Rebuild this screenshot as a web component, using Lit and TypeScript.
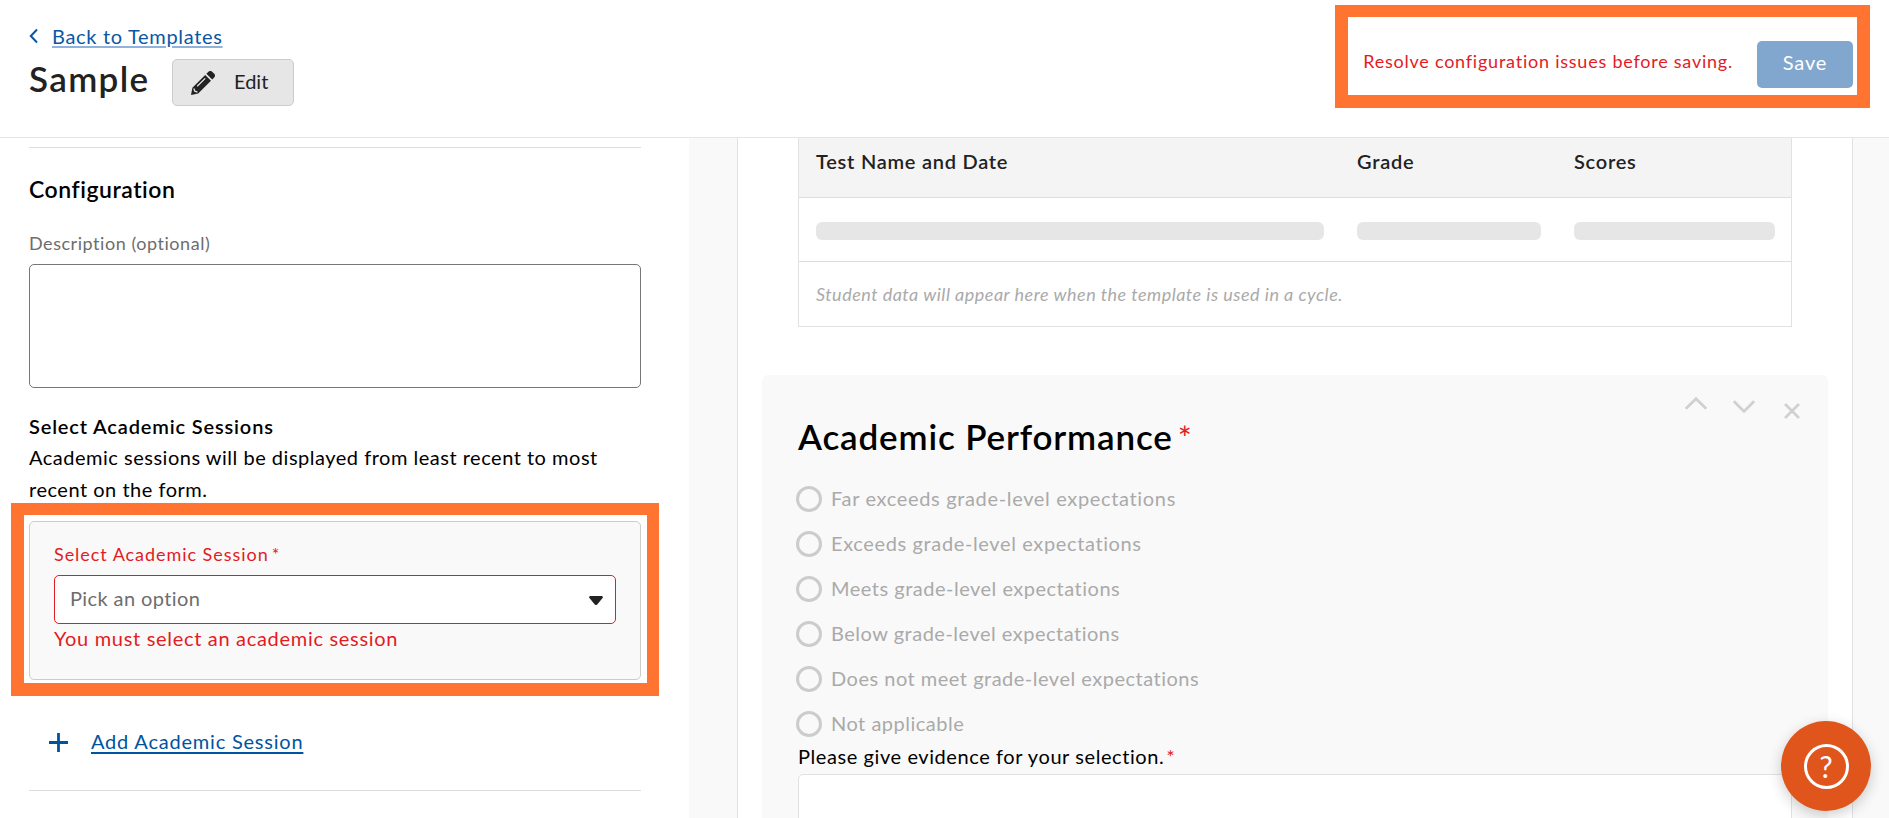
import {LitElement, html, css} from 'lit';
import {customElement, property} from 'lit/decorators.js';

@customElement('page-header')
class PageHeader extends LitElement {
  static override styles = css`
    :host {
      display: flex;
      justify-content: space-between;
      align-items: flex-start;
      box-sizing: border-box;
      height: 138px;
      padding: 24px 36px 0 29px;
      border-bottom: 1px solid #e5e5e5;
      background: white;
    }

    .back {
      display: flex;
      align-items: center;
      height: 24px;
      gap: 14px;
      color: #0a57a4;
      line-height: 24px;
      letter-spacing: 0.68px;
    }

    .back svg {
      width: 9px;
      height: 16px;
    }

    .back span {
      text-decoration: underline 2px #8fb3da;
      text-underline-offset: 2px;
    }

    .title {
      display: flex;
      align-items: flex-start;
      gap: 23px;
      margin-top: 11px;
    }

    h1 {
      width: 120px;
      margin: 0;
      color: #222;
      font-size: 35px;
      font-weight: 600;
      line-height: 39px;
      letter-spacing: 1.35px;
    }

    button {
      display: flex;
      align-items: center;
      box-sizing: border-box;
      height: 47px;
      border-radius: 5px;
      font: inherit;
    }

    .edit {
      width: 122px;
      gap: 19px;
      padding: 0 0 3px 18px;
      border: 1px solid #ccc;
      background: #e6e6e6;
      color: #222;
    }

    .edit svg {
      width: 24px;
      height: 24px;
      margin-top: 4px;
    }

    .actions {
      display: flex;
      align-items: center;
      gap: 24px;
      margin-top: 17px;
    }

    .error {
      padding-bottom: 8px;
      color: #e31b23;
      font-size: 18px;
      letter-spacing: 0.77px;
    }

    .save {
      justify-content: center;
      width: 96px;
      padding: 0 0 5px;
      border: none;
      background: #82a7ce;
      color: white;
      letter-spacing: 0.9px;
    }
  `;

  override render() {
    return html`
      <div>
        <div class="back">
          <svg viewBox="0 0 9 16" fill="none" stroke="currentColor" stroke-width="2">
            <path d="M8 1.5 1.8 8 8 14.5" />
          </svg>
          <span>Back to Templates</span>
        </div>
        <div class="title">
          <h1>Sample</h1>
          <button class="edit">
            <svg viewBox="0 0 24 24">
              <path
                fill="#222"
                d="M0 24 1.4 16.8 14.2 4 20 9.8 7.2 22.6zM15.4 2.8 17.2 1a3 3 0 0 1 4.2 0L23 2.6a3 3 0 0 1 0 4.2L21.2 8.6z"
              />
              <path
                fill="none"
                stroke="#e6e6e6"
                stroke-width="1.3"
                d="M6.2 15.2 14.2 7.4M2.8 17.6l1 2.6 2.6 1"
              />
            </svg>
            Edit
          </button>
        </div>
      </div>
      <div class="actions">
        <span class="error">Resolve configuration issues before saving.</span>
        <button class="save">Save</button>
      </div>
    `;
  }
}

@customElement('config-panel')
class ConfigPanel extends LitElement {
  static override styles = css`
    :host {
      display: block;
      box-sizing: border-box;
      width: 689px;
      padding: 9px 48px 0 29px;
      background: white;
    }

    hr {
      height: 1px;
      margin: 0;
      border: none;
      background: #ddd;
    }

    h2 {
      margin: 27px 0 0;
      font-size: 23px;
      font-weight: 600;
      line-height: 28px;
      letter-spacing: 0.53px;
    }

    .label {
      font-size: 18px;
      line-height: 22px;
    }

    .label--muted {
      margin-top: 29px;
      color: #6d6d6d;
      letter-spacing: 0.54px;
    }

    .label--error {
      color: #e31b23;
      letter-spacing: 0.95px;
    }

    .label--error span {
      margin-left: 3px;
    }

    .textarea {
      box-sizing: border-box;
      height: 124px;
      margin-top: 10px;
      border: 1px solid #777;
      border-radius: 5px;
    }

    h3 {
      margin: 26px 0 3px;
      font-size: 20px;
      font-weight: 600;
      line-height: 24px;
      letter-spacing: 0.84px;
    }

    p {
      margin: 0;
      line-height: 32px;
      letter-spacing: 0.51px;
    }

    .session {
      box-sizing: border-box;
      height: 159px;
      margin-top: 16px;
      padding: 21px 24px 0;
      border: 1px solid #ccc;
      border-radius: 5px;
      background: #f9f9f9;
    }

    .select {
      display: flex;
      align-items: center;
      justify-content: space-between;
      box-sizing: border-box;
      height: 49px;
      margin: 10px 0 2px;
      padding: 0 12px 3px 15px;
      border: 1px solid #e31b23;
      border-radius: 5px;
      background: white;
      color: #6d6d6d;
      letter-spacing: 0.4px;
    }

    .select svg {
      width: 14px;
      height: 9px;
      margin-top: 4px;
    }

    .message {
      color: #e31b23;
      line-height: 24px;
      letter-spacing: 0.69px;
    }

    .add {
      display: flex;
      align-items: center;
      gap: 23px;
      margin: 49px 0 37px;
      padding-left: 20px;
      color: #00539f;
      line-height: 24px;
      letter-spacing: 0.79px;
    }

    .add svg {
      width: 19px;
      height: 19px;
      margin-top: 3px;
    }

    .add span {
      text-decoration: underline 2px;
      text-underline-offset: 3px;
    }
  `;

  override render() {
    return html`
      <hr />
      <h2>Configuration</h2>
      <div class="label label--muted">Description (optional)</div>
      <div class="textarea"></div>
      <h3>Select Academic Sessions</h3>
      <p>
        Academic sessions will be displayed from least recent to most<br />recent on the form.
      </p>
      <div class="session">
        <div class="label label--error">Select Academic Session<span>*</span></div>
        <div class="select">
          Pick an option
          <svg viewBox="0 0 14 9">
            <path
              d="M1.4 0h11.2a1.3 1.3 0 0 1 1 2.1L8.2 8.4a1.6 1.6 0 0 1-2.4 0L.4 2.1A1.3 1.3 0 0 1 1.4 0z"
              fill="#222"
            />
          </svg>
        </div>
        <div class="message">You must select an academic session</div>
      </div>
      <div class="add">
        <svg viewBox="0 0 19 19" stroke="currentColor" stroke-width="2.8">
          <path d="M9.5 0v19M0 9.5h19" />
        </svg>
        <span>Add Academic Session</span>
      </div>
      <hr />
    `;
  }
}

@customElement('score-table')
class ScoreTable extends LitElement {
  static override styles = css`
    :host {
      display: block;
      margin: 0 60px;
      border: 1px solid #e2e2e2;
      border-top: none;
    }

    .row {
      display: grid;
      grid-template-columns: 508px 184px 201px;
      column-gap: 33px;
      box-sizing: border-box;
      height: 64px;
      padding: 2px 0 0 17px;
      align-items: center;
      border-bottom: 1px solid #ddd;
    }

    .row--head {
      height: 60px;
      padding-top: 11px;
      align-items: start;
      background: #f4f4f4;
      color: #222;
      font-weight: 600;
      line-height: 24px;
      letter-spacing: 0.75px;
    }

    .bone {
      height: 18px;
      border-radius: 6px;
      background: #e6e6e6;
    }

    .note {
      height: 64px;
      padding-left: 17px;
      color: #aaa;
      font-size: 18px;
      font-style: italic;
      line-height: 64px;
      letter-spacing: 0.48px;
    }
  `;

  @property({type: Array})
  columns: string[] = [];

  override render() {
    return html`
      <div class="row row--head">${this.columns.map((c) => html`<span>${c}</span>`)}</div>
      <div class="row">${this.columns.map(() => html`<div class="bone"></div>`)}</div>
      <div class="note">Student data will appear here when the template is used in a cycle.</div>
    `;
  }
}

@customElement('question-card')
class QuestionCard extends LitElement {
  static override styles = css`
    :host {
      display: block;
      height: 520px;
      margin: 48px 24px 0;
      padding: 0 36px;
      border-radius: 6px;
      background: #f9f9f9;
    }

    .head {
      display: flex;
      justify-content: space-between;
      align-items: flex-start;
      height: 81px;
    }

    h2 {
      margin: 41px 0 0;
      font-size: 35px;
      font-weight: 600;
      line-height: 40px;
      letter-spacing: 0.85px;
    }

    .required {
      color: #e31b23;
      font-weight: 400;
    }

    h2 .required {
      margin-left: 5px;
      font-size: 33px;
      line-height: 30px;
    }

    .controls {
      display: flex;
      gap: 24px;
      margin: 17px -12px 0 0;
    }

    .controls svg {
      width: 24px;
      height: 24px;
      overflow: visible;
      fill: none;
      stroke: #d0d0d0;
      stroke-width: 2.8;
    }

    .options {
      display: grid;
      gap: 20px;
      margin: 30px 0 8px -2px;
      color: #aaa;
      line-height: 25px;
      letter-spacing: 0.5px;
    }

    .option {
      display: flex;
      gap: 9px;
    }

    .option:first-child {
      letter-spacing: 0.66px;
    }

    .option:nth-child(2) {
      letter-spacing: 0.63px;
    }

    .radio {
      box-sizing: border-box;
      width: 26px;
      height: 26px;
      margin-bottom: -1px;
      border: 3px solid #ccc;
      border-radius: 50%;
    }

    .prompt {
      line-height: 24px;
      letter-spacing: 0.58px;
    }

    .prompt .required {
      margin-left: 2px;
    }

    .answer {
      height: 120px;
      margin-top: 6px;
      border: 1px solid #e2e2e2;
      border-radius: 5px;
      background: white;
    }
  `;

  @property()
  heading = '';

  @property({type: Array})
  options: string[] = [];

  override render() {
    return html`
      <div class="head">
        <h2>${this.heading}<span class="required">*</span></h2>
        <div class="controls">
          <svg viewBox="0 0 24 24"><path d="M1.8 16.8 12 6.7l10.2 10.1" /></svg>
          <svg viewBox="0 0 24 24"><path d="M1.8 9.3 12 19.4 22.2 9.3" /></svg>
          <svg viewBox="0 0 24 24"><path d="m5 12 14 14M19 12 5 26" /></svg>
        </div>
      </div>
      <div class="options">
        ${this.options.map(
          (o) => html`<div class="option"><span class="radio"></span>${o}</div>`
        )}
      </div>
      <div class="prompt">
        Please give evidence for your selection.<span class="required">*</span>
      </div>
      <div class="answer"></div>
    `;
  }
}

@customElement('app-root')
class AppRoot extends LitElement {
  static override styles = css`
    :host {
      display: block;
      position: relative;
      width: 1889px;
      height: 818px;
      overflow: hidden;
      background: white;
      color: #000;
      font: 20px Lato, 'Open Sans', sans-serif;
    }

    .body {
      display: flex;
      height: 680px;
      overflow: hidden;
    }

    main {
      flex: 1;
      padding: 0 36px 0 48px;
      background: #f9f9f9;
    }

    .paper {
      height: 680px;
      overflow: hidden;
      border: solid #e2e2e2;
      border-width: 0 1px;
      background: white;
    }

    .highlight {
      position: absolute;
      box-sizing: border-box;
      border: 13px solid #ff7431;
      pointer-events: none;
    }

    .highlight--save {
      top: 5px;
      right: 19px;
      width: 535px;
      height: 103px;
      border-top-width: 12px;
    }

    .highlight--session {
      top: 503px;
      left: 11px;
      width: 648px;
      height: 193px;
      border-width: 12px 12px 13px 13px;
    }

    .help {
      position: absolute;
      right: 18px;
      bottom: 7px;
      display: flex;
      align-items: center;
      justify-content: center;
      width: 90px;
      height: 90px;
      border-radius: 50%;
      background: #e0551b;
      box-shadow: 0 4px 14px rgba(0, 0, 0, 0.2);
    }

    .help span {
      box-sizing: border-box;
      width: 45px;
      height: 45px;
      border: 3px solid white;
      border-radius: 50%;
      color: white;
      font-size: 30px;
      line-height: 38px;
      text-align: center;
    }
  `;

  override render() {
    return html`
      <page-header></page-header>
      <div class="body">
        <config-panel></config-panel>
        <main>
          <div class="paper">
            <score-table .columns=${['Test Name and Date', 'Grade', 'Scores']}></score-table>
            <question-card
              heading="Academic Performance"
              .options=${[
                'Far exceeds grade-level expectations',
                'Exceeds grade-level expectations',
                'Meets grade-level expectations',
                'Below grade-level expectations',
                'Does not meet grade-level expectations',
                'Not applicable',
              ]}
            ></question-card>
          </div>
        </main>
      </div>
      <div class="highlight highlight--save"></div>
      <div class="highlight highlight--session"></div>
      <div class="help"><span>?</span></div>
    `;
  }
}

declare global {
  interface HTMLElementTagNameMap {
    'app-root': AppRoot;
    'page-header': PageHeader;
    'config-panel': ConfigPanel;
    'score-table': ScoreTable;
    'question-card': QuestionCard;
  }
}
